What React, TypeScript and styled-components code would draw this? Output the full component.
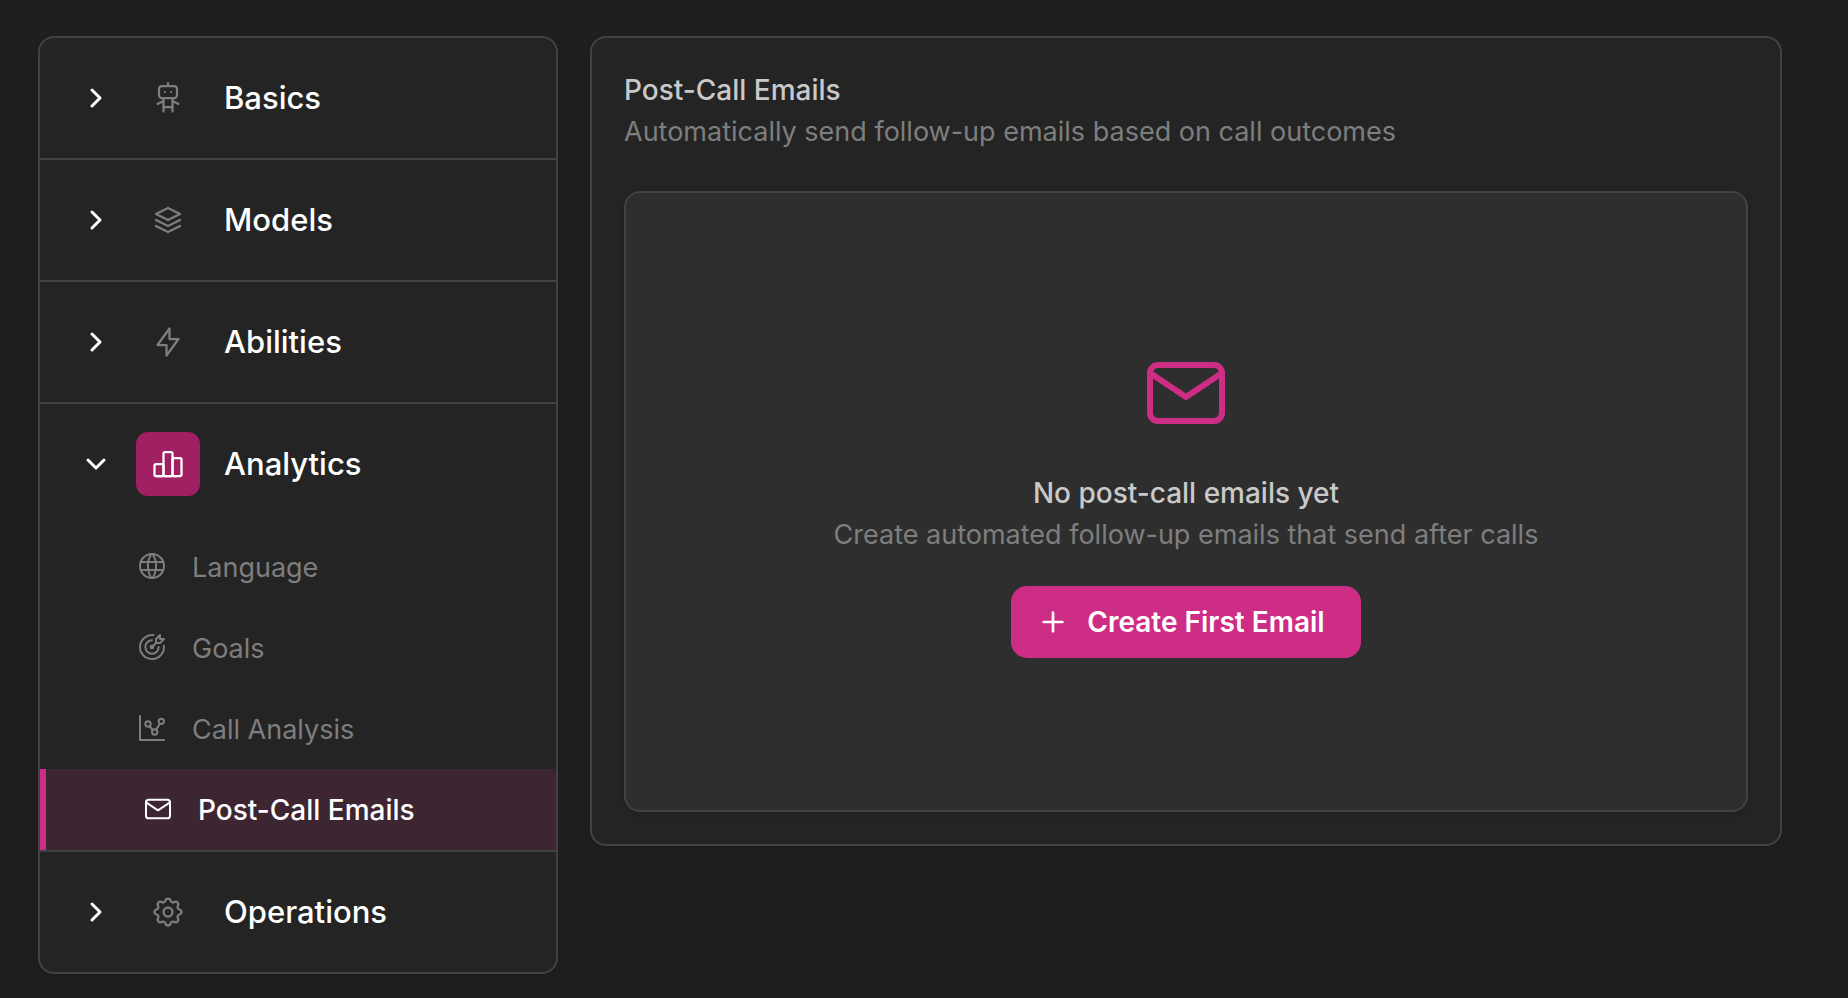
import React, { useState } from "react";
import styled, { createGlobalStyle } from "styled-components";
import {
  TbRobot,
  TbStack2,
  TbBolt,
  TbChartBar,
  TbSettings,
  TbWorld,
  TbTargetArrow,
  TbChartDots,
  TbMail,
  TbPlus,
  TbChevronRight,
  TbChevronDown,
} from "react-icons/tb";

const color = {
  page: "#1f1f1f",
  panel: "#242424",
  inset: "#2e2e2e",
  line: "#424242",
  muted: "#7e7e7e",
  soft: "#c9c9c9",
  white: "#ffffff",
  pink: "#cd2d84",
  tile: "#a02063",
  selected: "#3d2532",
};

const GlobalStyle = createGlobalStyle`
  *, *::before, *::after { box-sizing: border-box; }
  body {
    margin: 0;
    background: ${color.page};
    color: ${color.white};
    font-family: Inter, "Liberation Sans", sans-serif;
    font-size: 28px;
    line-height: 41px;
    -webkit-font-smoothing: antialiased;
  }
  button { font: inherit; cursor: pointer; }
`;

const Page = styled.div`
  display: flex;
  align-items: flex-start;
  gap: 32px;
  padding: 36px 66px 24px 38px;
`;

const Panel = styled.div`
  background: ${color.panel};
  border: 2px solid ${color.line};
  border-radius: 16px;
  box-shadow: 0 2px 6px rgba(0, 0, 0, 0.14);
`;

const Sidebar = styled(Panel).attrs({ as: "nav" })`
  flex: 0 0 520px;
  overflow: hidden;
`;

const Section = styled.section`
  & + & {
    border-top: 2px solid ${color.line};
  }
`;

const SectionButton = styled.button`
  display: flex;
  align-items: center;
  gap: 24px;
  width: 100%;
  height: 120px;
  padding: 0 40px;
  border: 0;
  background: none;
  color: ${color.white};
  text-align: left;
`;

const IconTile = styled.span<{ $active: boolean }>`
  display: flex;
  align-items: center;
  justify-content: center;
  width: 64px;
  height: 64px;
  border-radius: 12px;
  background: ${(p) => (p.$active ? color.tile : "transparent")};
  color: ${(p) => (p.$active ? color.white : color.muted)};
`;

const SectionName = styled.span`
  font-size: 31px;
  line-height: 40px;
  font-weight: 500;
`;

const SubList = styled.ul`
  margin: 0;
  padding: 2px 0 0;
  list-style: none;
`;

const SubLink = styled.a<{ $selected: boolean }>`
  display: flex;
  align-items: center;
  gap: 24px;
  height: 81px;
  padding: 0 0 2px 96px;
  color: ${(p) => (p.$selected ? color.white : color.muted)};
  background: ${(p) => (p.$selected ? color.selected : "transparent")};
  border-left: ${(p) => (p.$selected ? `6px solid ${color.pink}` : "0")};
  font-size: ${(p) => (p.$selected ? "28px" : "27px")};
  font-weight: ${(p) => (p.$selected ? 500 : 400)};
  text-decoration: none;
`;

const SubName = styled.span`
  padding-top: 3px;
`;

const Content = styled(Panel).attrs({ as: "main" })`
  flex: 1;
  min-width: 0;
  padding: 32px;
`;

const Title = styled.h2`
  margin: 0;
  font-size: 28px;
  font-weight: 500;
  color: ${color.soft};
`;

const Description = styled.p`
  margin: 0;
  font-size: 27px;
  color: ${color.muted};
`;

const EmptyState = styled(Panel)`
  display: flex;
  flex-direction: column;
  align-items: center;
  margin-top: 39px;
  padding: 152px 32px;
  background: ${color.inset};
  text-align: center;
`;

const EmptyIcon = styled.span`
  display: flex;
  margin-bottom: 32px;
  color: ${color.pink};
`;

const CreateButton = styled.button`
  display: flex;
  align-items: center;
  gap: 18px;
  height: 72px;
  margin-top: 31px;
  padding: 0 36px 0 26px;
  border: 0;
  border-radius: 16px;
  background: ${color.pink};
  color: ${color.white};
  && {
    font-weight: 600;
  }
`;

const sections = [
  { name: "Basics", Icon: TbRobot },
  { name: "Models", Icon: TbStack2 },
  { name: "Abilities", Icon: TbBolt },
  {
    name: "Analytics",
    Icon: TbChartBar,
    items: [
      { name: "Language", Icon: TbWorld },
      { name: "Goals", Icon: TbTargetArrow },
      { name: "Call Analysis", Icon: TbChartDots },
      { name: "Post-Call Emails", Icon: TbMail },
    ],
  },
  { name: "Operations", Icon: TbSettings },
];

export default function App() {
  const [open, setOpen] = useState("Analytics");
  const [selected, setSelected] = useState("Post-Call Emails");

  return (
    <>
      <GlobalStyle />
      <Page>
        <Sidebar aria-label="Agent settings">
          {sections.map(({ name, Icon, items }) => {
            const isOpen = open === name;
            const Chevron = isOpen ? TbChevronDown : TbChevronRight;
            return (
              <Section key={name}>
                <SectionButton
                  type="button"
                  aria-expanded={isOpen}
                  onClick={() => setOpen(isOpen ? "" : name)}
                >
                  <Chevron size={32} strokeWidth={2.25} />
                  <IconTile $active={isOpen}>
                    <Icon size={36} strokeWidth={1.5} />
                  </IconTile>
                  <SectionName>{name}</SectionName>
                </SectionButton>
                {isOpen && items && (
                  <SubList>
                    {items.map((item) => (
                      <li key={item.name}>
                        <SubLink
                          href="#"
                          $selected={selected === item.name}
                          aria-current={selected === item.name ? "page" : undefined}
                          onClick={() => setSelected(item.name)}
                        >
                          <item.Icon size={32} strokeWidth={1.5} />
                          <SubName>{item.name}</SubName>
                        </SubLink>
                      </li>
                    ))}
                  </SubList>
                )}
              </Section>
            );
          })}
        </Sidebar>
        <Content>
          <Title>Post-Call Emails</Title>
          <Description>Automatically send follow-up emails based on call outcomes</Description>
          <EmptyState>
            <EmptyIcon>
              <TbMail size={96} strokeWidth={1.5} />
            </EmptyIcon>
            <Title as="h3">No post-call emails yet</Title>
            <Description>Create automated follow-up emails that send after calls</Description>
            <CreateButton type="button">
              <TbPlus size={32} strokeWidth={2} />
              Create First Email
            </CreateButton>
          </EmptyState>
        </Content>
      </Page>
    </>
  );
}
